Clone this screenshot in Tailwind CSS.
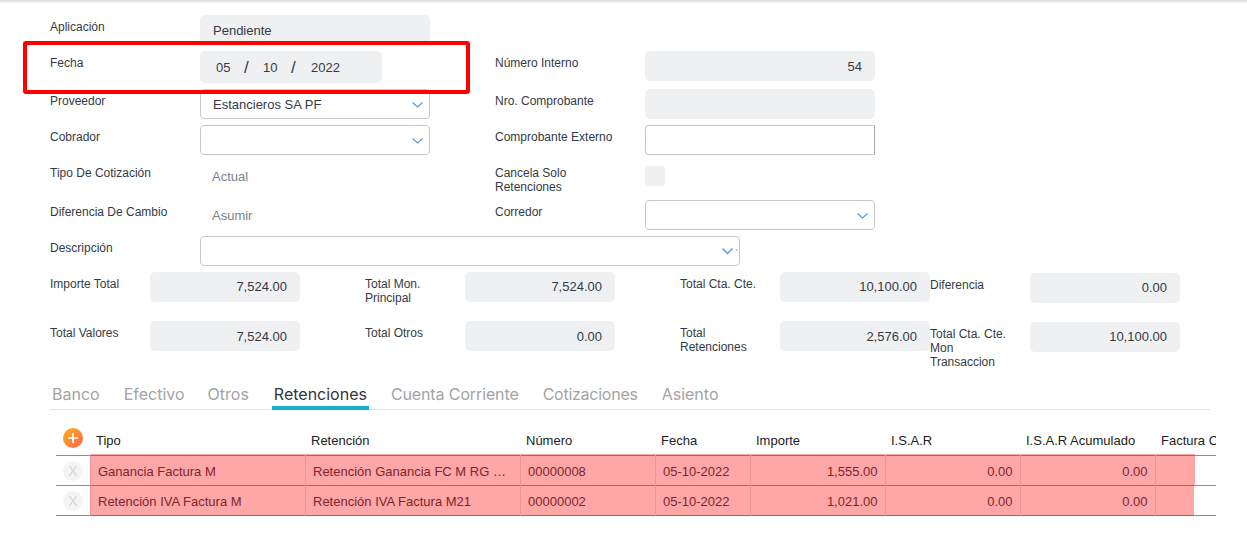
<!DOCTYPE html>
<html lang="es">
<head>
	<meta charset="UTF-8" />
	<title>Recibo</title>
	<script src="https://cdn.jsdelivr.net/npm/@tailwindcss/browser@4"></script>
</head>
<body class="bg-white overflow-hidden font-['Liberation_Sans',Arial,sans-serif] text-[#343a45]">
	<div class="relative w-[1247px] h-[546px] overflow-hidden">
		<!-- top shadow -->
		<div class="h-[3px] bg-gradient-to-b from-[#d9dadc] to-[#f6f6f7]"></div>

		<!-- Form -->
		<div class="pl-[50px] pt-[12px]">
			<div class="flex h-[36px]">
				<label class="w-[150px] pt-[5px] text-xs leading-[14px]">Aplicación</label>
				<div class="w-[230px] h-[30px] bg-[#eff0f2] rounded-[5px] pl-[13px] pt-[8px] text-[13px] leading-[15px]">Pendiente</div>
			</div>
			<div class="grid grid-cols-[445px_380px] grid-rows-[38px_36px_36px_39px_36px_36px]">
				<div class="flex">
					<label class="w-[150px] pt-[5px] text-xs leading-[14px]">Fecha</label>
					<div class="w-[182px] h-[32px] bg-[#eff0f2] rounded-[5px] flex items-center pl-[16px] pt-[2px] text-[13px]">
						<span class="w-[28px]">05</span><span class="w-[19px] text-[17px] font-light leading-[15px] -mt-[2px]">/</span><span class="w-[28px]">10</span><span class="w-[20px] text-[17px] font-light leading-[15px] -mt-[2px]">/</span><span>2022</span>
					</div>
				</div>
				<div class="flex">
					<label class="w-[150px] pt-[5px] text-xs leading-[14px]">Número Interno</label>
					<div class="w-[230px] h-[30px] bg-[#eff0f2] rounded-[5px] flex items-center justify-end pt-[2px] pr-[13px] text-[13px]">54</div>
				</div>

				<div class="flex">
					<label class="w-[150px] pt-[5px] text-xs leading-[14px]">Proveedor</label>
					<div class="relative w-[230px] h-[30px] border border-[#c8c8c8] rounded-[4px] flex items-center pl-[12px] pt-[2px] text-[13px]">
						Estancieros SA PF
						<svg class="absolute right-[6px] top-[12px] w-[11px] h-[6px]" viewBox="0 0 11 6" fill="none" stroke="#5b9bd9" stroke-width="1.2"><path d="M0.5 0.5 5.5 5 10.5 0.5"/></svg>
					</div>
				</div>
				<div class="flex">
					<label class="w-[150px] pt-[5px] text-xs leading-[14px]">Nro. Comprobante</label>
					<div class="w-[230px] h-[30px] bg-[#eff0f2] rounded-[5px]"></div>
				</div>

				<div class="flex">
					<label class="w-[150px] pt-[5px] text-xs leading-[14px]">Cobrador</label>
					<div class="relative w-[230px] h-[30px] border border-[#c8c8c8] rounded-[4px]">
						<svg class="absolute right-[6px] top-[12px] w-[11px] h-[6px]" viewBox="0 0 11 6" fill="none" stroke="#5b9bd9" stroke-width="1.2"><path d="M0.5 0.5 5.5 5 10.5 0.5"/></svg>
					</div>
				</div>
				<div class="flex">
					<label class="w-[150px] pt-[5px] text-xs leading-[14px]">Comprobante Externo</label>
					<div class="w-[230px] h-[30px] border border-[#c8c8c8] border-r-[#a9a9a9] rounded-l-[4px]"></div>
				</div>

				<div class="flex">
					<label class="w-[150px] pt-[5px] text-xs leading-[14px]">Tipo De Cotización</label>
					<div class="pl-[12px] pt-[8px] text-[13px] leading-[15px] text-[#7d8087]">Actual</div>
				</div>
				<div class="flex">
					<label class="w-[150px] pt-[5px] text-xs leading-[14px]">Cancela Solo<br>Retenciones</label>
					<div class="w-[20px] h-[20px] mt-[5px] bg-[#eff0f2] rounded-[4px]"></div>
				</div>

				<div class="flex">
					<label class="w-[150px] pt-[5px] text-xs leading-[14px]">Diferencia De Cambio</label>
					<div class="pl-[12px] pt-[8px] text-[13px] leading-[15px] text-[#7d8087]">Asumir</div>
				</div>
				<div class="flex">
					<label class="w-[150px] pt-[5px] text-xs leading-[14px]">Corredor</label>
					<div class="relative w-[230px] h-[30px] border border-[#c8c8c8] rounded-[4px]">
						<svg class="absolute right-[6px] top-[12px] w-[11px] h-[6px]" viewBox="0 0 11 6" fill="none" stroke="#5b9bd9" stroke-width="1.2"><path d="M0.5 0.5 5.5 5 10.5 0.5"/></svg>
					</div>
				</div>

				<div class="flex col-span-2">
					<label class="w-[150px] pt-[5px] text-xs leading-[14px]">Descripción</label>
					<div class="relative w-[540px] h-[30px] border border-[#c8c8c8] rounded-[4px]">
						<svg class="absolute right-[6px] top-[11px] w-[11px] h-[7px]" viewBox="0 0 11 7" fill="none" stroke="#5b9bd9" stroke-width="1.5"><path d="M0.5 0.5 5.5 5.5 10.5 0.5"/></svg>
						<i class="absolute right-[2px] top-[12px] w-[1px] h-[2px] bg-[#9cc2e8]"></i>
					</div>
				</div>
			</div>

			<!-- Totals -->
			<div class="grid grid-cols-[315px_315px_250px_250px] grid-rows-[49px_60px]">
				<div class="flex">
					<label class="w-[100px] pt-[5px] text-xs leading-[14px]">Importe Total</label>
					<div class="w-[150px] h-[30px] bg-[#eff0f2] rounded-[5px] flex items-center justify-end pr-[13px] text-[13px]">7,524.00</div>
				</div>
				<div class="flex">
					<label class="w-[100px] pt-[5px] text-xs leading-[14px]">Total Mon.<br>Principal</label>
					<div class="w-[150px] h-[30px] bg-[#eff0f2] rounded-[5px] flex items-center justify-end pr-[13px] text-[13px]">7,524.00</div>
				</div>
				<div class="flex">
					<label class="w-[100px] pt-[5px] text-xs leading-[14px]">Total Cta. Cte.</label>
					<div class="w-[150px] h-[30px] bg-[#eff0f2] rounded-[5px] flex items-center justify-end pr-[13px] text-[13px]">10,100.00</div>
				</div>
				<div class="flex pt-[1px]">
					<label class="w-[100px] pt-[5px] text-xs leading-[14px]">Diferencia</label>
					<div class="w-[150px] h-[30px] bg-[#eff0f2] rounded-[5px] flex items-center justify-end pr-[13px] text-[13px]">0.00</div>
				</div>

				<div class="flex">
					<label class="w-[100px] pt-[5px] text-xs leading-[14px]">Total Valores</label>
					<div class="w-[150px] h-[30px] bg-[#eff0f2] rounded-[5px] flex items-center justify-end pt-[2px] pr-[13px] text-[13px]">7,524.00</div>
				</div>
				<div class="flex">
					<label class="w-[100px] pt-[5px] text-xs leading-[14px]">Total Otros</label>
					<div class="w-[150px] h-[30px] bg-[#eff0f2] rounded-[5px] flex items-center justify-end pt-[2px] pr-[13px] text-[13px]">0.00</div>
				</div>
				<div class="flex">
					<label class="w-[100px] pt-[5px] text-xs leading-[14px]">Total<br>Retenciones</label>
					<div class="w-[150px] h-[30px] bg-[#eff0f2] rounded-[5px] flex items-center justify-end pt-[2px] pr-[13px] text-[13px]">2,576.00</div>
				</div>
				<div class="flex pt-[1px]">
					<label class="w-[100px] pt-[5px] text-xs leading-[14px]">Total Cta. Cte.<br>Mon<br>Transaccion</label>
					<div class="w-[150px] h-[30px] bg-[#eff0f2] rounded-[5px] flex items-center justify-end pr-[13px] text-[13px]">10,100.00</div>
				</div>
			</div>

			<!-- Tabs -->
			<div class="w-[1160px] h-[29px] border-b border-[#e2e2e2] flex pl-[2px] pt-[3px] gap-[24px] font-['Inter',sans-serif] text-[16px] leading-[20px] text-[#a3a3a3]">
				<span>Banco</span>
				<span>Efectivo</span>
				<span class="-ml-[1px]">Otros</span>
				<span class="relative ml-[1px] text-[#2f3640]">Retenciones<i class="absolute -left-[2px] -right-[2px] top-[22px] h-[4px] bg-[#17aecf]"></i></span>
				<span class="tracking-[-0.12px]">Cuenta Corriente</span>
				<span class="tracking-[-0.25px]">Cotizaciones</span>
				<span>Asiento</span>
			</div>
		</div>

		<!-- Table -->
		<table class="ml-[56px] mt-[15px] w-[1160px] table-fixed border-collapse text-[13px]">
			<colgroup>
				<col class="w-[34px]"><col class="w-[215px]"><col class="w-[215px]"><col class="w-[135px]"><col class="w-[95px]"><col class="w-[135px]"><col class="w-[135px]"><col class="w-[135px]"><col class="w-[61px]">
			</colgroup>
			<thead>
				<tr class="h-[30px] text-left text-[#222]">
					<th class="p-0 pb-[4px] font-normal">
						<span class="ml-[7px] flex w-[20px] h-[20px] items-center justify-center rounded-full bg-gradient-to-br from-[#ffb000] to-[#ff5f4a]">
							<svg class="w-[10px] h-[10px]" viewBox="0 0 10 10" stroke="#fff" stroke-width="1.6"><path d="M5 0v10M0 5h10"/></svg>
						</span>
					</th>
					<th class="p-0 pl-[6px] pt-[2px] font-normal">Tipo</th>
					<th class="p-0 pl-[6px] pt-[2px] font-normal">Retención</th>
					<th class="p-0 pl-[6px] pt-[2px] font-normal">Número</th>
					<th class="p-0 pl-[6px] pt-[2px] font-normal">Fecha</th>
					<th class="p-0 pl-[6px] pt-[2px] font-normal">Importe</th>
					<th class="p-0 pl-[6px] pt-[2px] font-normal">I.S.A.R</th>
					<th class="p-0 pl-[6px] pt-[2px] font-normal">I.S.A.R Acumulado</th>
					<th class="p-0 pl-[6px] pt-[2px] font-normal whitespace-nowrap overflow-hidden">Factura C</th>
				</tr>
			</thead>
			<tbody>
				<tr class="h-[30px] border-y border-[#8f8f8f]">
					<td class="p-0 pt-[2px]"><span class="ml-[7px] flex w-[20px] h-[20px] items-center justify-center rounded-full bg-[#f4f4f4] text-[#d4d4d4] text-sm">X</span></td>
					<td class="p-0 pl-[7.5px] pt-[4px] border-l border-[#e4e4e4]">Ganancia Factura M</td>
					<td class="p-0 pl-[7.5px] pt-[4px] border-l border-[#e4e4e4] truncate pr-[12px]">Retención Ganancia FC M RG 830</td>
					<td class="p-0 pl-[7.5px] pt-[4px] border-l border-[#e4e4e4]">00000008</td>
					<td class="p-0 pl-[7.5px] pt-[4px] border-l border-[#e4e4e4]">05-10-2022</td>
					<td class="p-0 pr-[7px] pt-[4px] text-right border-l border-[#e4e4e4]">1,555.00</td>
					<td class="p-0 pr-[7px] pt-[4px] text-right border-l border-[#e4e4e4]">0.00</td>
					<td class="p-0 pr-[7px] pt-[4px] text-right border-l border-[#e4e4e4]">0.00</td>
					<td class="p-0 border-l border-[#e4e4e4]"></td>
				</tr>
				<tr class="h-[30px] border-y border-[#8f8f8f]">
					<td class="p-0 pt-[2px]"><span class="ml-[7px] flex w-[20px] h-[20px] items-center justify-center rounded-full bg-[#f4f4f4] text-[#d4d4d4] text-sm">X</span></td>
					<td class="p-0 pl-[7.5px] pt-[4px] border-l border-[#e4e4e4]">Retención IVA Factura M</td>
					<td class="p-0 pl-[7.5px] pt-[4px] border-l border-[#e4e4e4] truncate pr-[12px]">Retención IVA Factura M21</td>
					<td class="p-0 pl-[7.5px] pt-[4px] border-l border-[#e4e4e4]">00000002</td>
					<td class="p-0 pl-[7.5px] pt-[4px] border-l border-[#e4e4e4]">05-10-2022</td>
					<td class="p-0 pr-[7px] pt-[4px] text-right border-l border-[#e4e4e4]">1,021.00</td>
					<td class="p-0 pr-[7px] pt-[4px] text-right border-l border-[#e4e4e4]">0.00</td>
					<td class="p-0 pr-[7px] pt-[4px] text-right border-l border-[#e4e4e4]">0.00</td>
					<td class="p-0 border-l border-[#e4e4e4]"></td>
				</tr>
			</tbody>
		</table>

		<!-- Annotations painted over the capture -->
		<div class="absolute left-[23px] top-[41px] w-[447px] h-[53px] border-[4px] border-[#ff0000] rounded-[3px]"></div>
		<div class="absolute left-[90px] top-[454px] w-[1105px] h-[31px] bg-[#ff0000]/35"></div>
		<div class="absolute left-[90px] top-[485px] w-[1104px] h-[31px] bg-[#ff0000]/35"></div>
	</div>
</body>
</html>
